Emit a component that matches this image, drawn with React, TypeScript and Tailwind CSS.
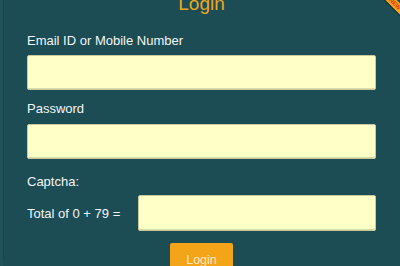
import React from "react";

export default function App() {
  return (
    <div className="relative w-[400px] h-[266px] overflow-hidden bg-[#1c4d55] border-l-[3px] border-[#1f5359] font-['Liberation_Sans',Arial,sans-serif]">
      <div className="absolute left-[352px] top-[0px] w-[80px] h-[8px] rotate-45 bg-[#f2a31f] shadow-[0_1px_1px_rgba(0,0,0,0.5)] flex items-center justify-center">
        <span className="text-[6px] leading-none font-bold text-[#d8341c]">NEW</span>
      </div>
      <div className="h-full border-l border-[#18454c] pl-[23px] pr-[24px]">
        <h1 className="mt-[-6px] text-center text-[19px] leading-[19px] text-[#eba81f]">Login</h1>
        <label className="block mt-[20px] text-[13px] leading-[15px] text-[#f4f4f4]">Email ID or Mobile Number</label>
        <input className="block mt-[7px] w-full h-[35px] bg-[#ffffc8] rounded-[2px] border border-[#c9c99c] shadow-[inset_0_-1px_0_rgba(0,0,0,0.15)]" />
        <label className="block mt-[11px] text-[13px] leading-[15px] text-[#f4f4f4]">Password</label>
        <input type="password" className="block mt-[8px] w-full h-[35px] bg-[#ffffc8] rounded-[2px] border border-[#c9c99c] shadow-[inset_0_-1px_0_rgba(0,0,0,0.15)]" />
        <label className="block mt-[15px] text-[13px] leading-[15px] text-[#f4f4f4]">Captcha:</label>
        <div className="mt-[6px] flex items-center">
          <span className="w-[111px] shrink-0 text-[13px] leading-[15px] text-[#f4f4f4]">Total of 0 + 79 =</span>
          <input className="block flex-1 h-[36px] bg-[#ffffc8] rounded-[2px] border border-[#c9c99c] shadow-[inset_0_-1px_0_rgba(0,0,0,0.15)]" />
        </div>
        <div className="mt-[12px] flex justify-center">
          <button className="w-[63px] pt-[10px] pb-[10px] bg-[#f4a418] rounded-[2px] text-[12.5px] leading-[15px] text-[#fbe8c4]">Login</button>
        </div>
      </div>
    </div>
  );
}
